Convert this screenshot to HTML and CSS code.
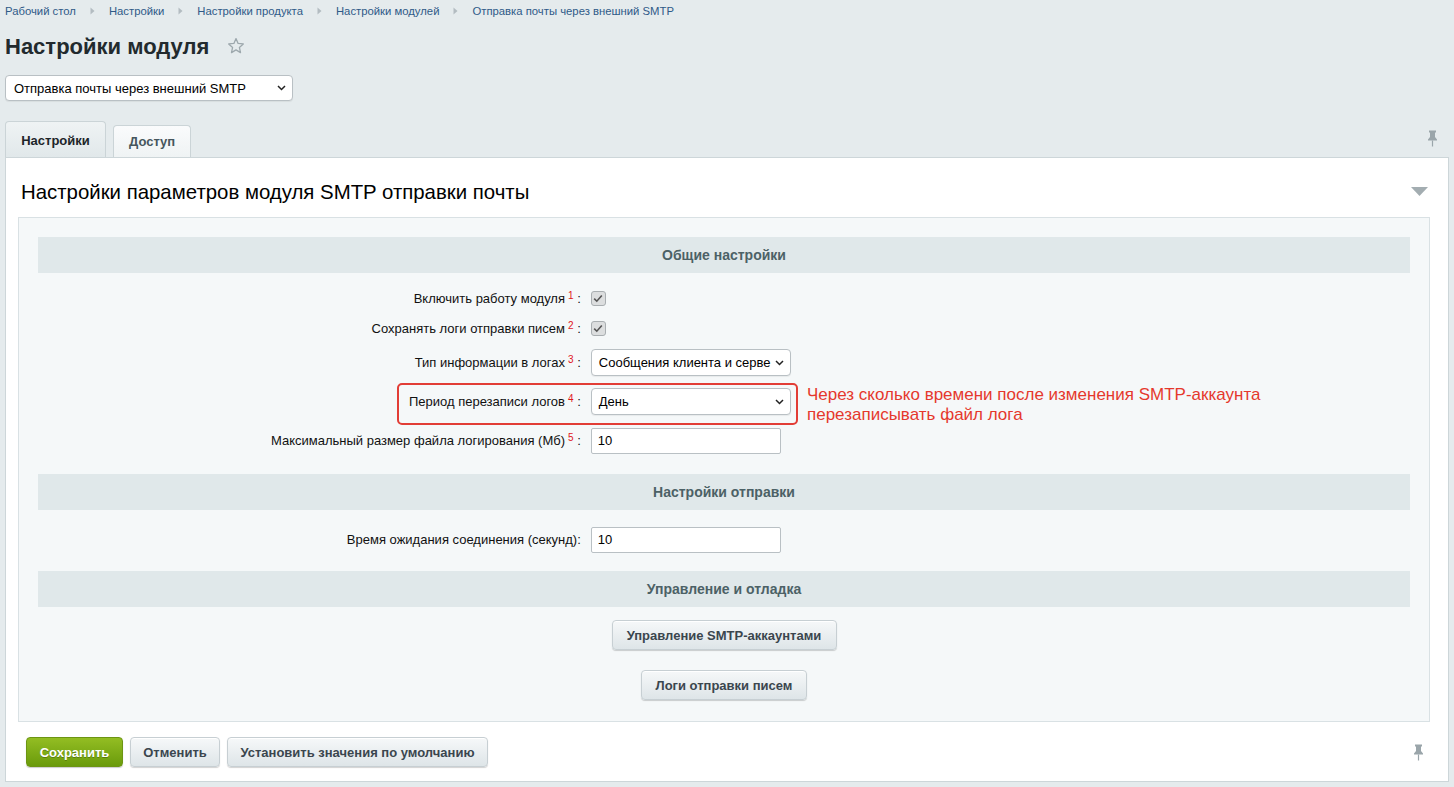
FILE: index.html
```html
<!DOCTYPE html>
<html lang="ru">
<head>
<meta charset="utf-8">
<title>Настройки модуля</title>
<link rel="stylesheet" href="styles.css">
</head>
<body>
<div class="page">
  <nav class="crumbs">
    <a class="crumb">Рабочий стол</a>
    <svg class="sep" width="5" height="8" viewBox="0 0 5 8"><path d="M0.5 0.5 L4.5 4 L0.5 7.5 Z" fill="#b3bcc1"/></svg>
    <a class="crumb">Настройки</a>
    <svg class="sep" width="5" height="8" viewBox="0 0 5 8"><path d="M0.5 0.5 L4.5 4 L0.5 7.5 Z" fill="#b3bcc1"/></svg>
    <a class="crumb">Настройки продукта</a>
    <svg class="sep" width="5" height="8" viewBox="0 0 5 8"><path d="M0.5 0.5 L4.5 4 L0.5 7.5 Z" fill="#b3bcc1"/></svg>
    <a class="crumb">Настройки модулей</a>
    <svg class="sep" width="5" height="8" viewBox="0 0 5 8"><path d="M0.5 0.5 L4.5 4 L0.5 7.5 Z" fill="#b3bcc1"/></svg>
    <a class="crumb">Отправка почты через внешний SMTP</a>
  </nav>

  <div class="title-row">
    <h1 class="title">Настройки модуля</h1>
    <svg class="star" width="18" height="18" viewBox="0 0 18 18"><path d="M9 1.6 L11.1 6.4 L16.3 6.9 L12.4 10.4 L13.5 15.6 L9 12.9 L4.5 15.6 L5.6 10.4 L1.7 6.9 L6.9 6.4 Z" fill="none" stroke="#9da8ad" stroke-width="1.3" stroke-linejoin="round"/></svg>
  </div>

  <div class="select module-select">
    <span class="select-text">Отправка почты через внешний SMTP</span>
    <svg class="chev" width="9" height="6" viewBox="0 0 9 6"><path d="M1 1 L4.5 4.5 L8 1" fill="none" stroke="#222" stroke-width="1.5"/></svg>
  </div>

  <div class="tabs">
    <div class="tab tab-active">Настройки</div>
    <div class="tab">Доступ</div>
    <div class="tabs-spacer"></div>
    <svg class="pin pin-top" width="11" height="17" viewBox="0 0 11 17"><path d="M2 0.5 H9 V2.5 H8 V7 L10 9.5 V10.5 H1 V9.5 L3 7 V2.5 H2 Z" fill="#9aa5aa"/><path d="M5.5 10.5 V16.5" stroke="#9aa5aa" stroke-width="1.2"/></svg>
  </div>

  <div class="panel">
    <div class="panel-head">
      <h2 class="panel-title">Настройки параметров модуля SMTP отправки почты</h2>
      <svg class="collapse" width="17" height="9" viewBox="0 0 17 9"><path d="M0 0 H17 L8.5 9 Z" fill="#a3adb1"/></svg>
    </div>

    <div class="inner">
      <section class="section sec-1">
        <div class="section-head">Общие настройки</div>
        <div class="row row-s">
          <div class="label">Включить работу модуля<sup class="num">1</sup> :</div>
          <div class="field"><span class="check"><svg width="10" height="9" viewBox="0 0 10 9"><path d="M1.2 4.6 L3.8 7.2 L8.8 1.4" fill="none" stroke="#555" stroke-width="1.6"/></svg></span></div>
        </div>
        <div class="row row-s">
          <div class="label">Сохранять логи отправки писем<sup class="num">2</sup> :</div>
          <div class="field"><span class="check"><svg width="10" height="9" viewBox="0 0 10 9"><path d="M1.2 4.6 L3.8 7.2 L8.8 1.4" fill="none" stroke="#555" stroke-width="1.6"/></svg></span></div>
        </div>
        <div class="row">
          <div class="label">Тип информации в логах<sup class="num">3</sup> :</div>
          <div class="field">
            <div class="select field-select">
              <span class="select-text">Сообщения клиента и серве</span>
              <svg class="chev" width="9" height="6" viewBox="0 0 9 6"><path d="M1 1 L4.5 4.5 L8 1" fill="none" stroke="#222" stroke-width="1.5"/></svg>
            </div>
          </div>
        </div>
        <div class="row row-mark">
          <div class="label">Период перезаписи логов<sup class="num">4</sup> :</div>
          <div class="field">
            <div class="select field-select">
              <span class="select-text">День</span>
              <svg class="chev" width="9" height="6" viewBox="0 0 9 6"><path d="M1 1 L4.5 4.5 L8 1" fill="none" stroke="#222" stroke-width="1.5"/></svg>
            </div>
          </div>
          <div class="mark-box"></div>
          <div class="mark-note">Через сколько времени после изменения SMTP-аккаунта<br>перезаписывать файл лога</div>
        </div>
        <div class="row">
          <div class="label">Максимальный размер файла логирования (Мб)<sup class="num">5</sup> :</div>
          <div class="field"><input class="text-input" type="text" value="10"></div>
        </div>
      </section>

      <section class="section sec-2">
        <div class="section-head">Настройки отправки</div>
        <div class="row">
          <div class="label">Время ожидания соединения (секунд):</div>
          <div class="field"><input class="text-input" type="text" value="10"></div>
        </div>
      </section>

      <section class="section sec-3">
        <div class="section-head">Управление и отладка</div>
        <div class="actions">
          <button class="btn btn-wide">Управление SMTP-аккаунтами</button>
          <button class="btn btn-mid">Логи отправки писем</button>
        </div>
      </section>
    </div>

    <div class="footer">
      <button class="btn btn-save">Сохранить</button>
      <button class="btn btn-cancel">Отменить</button>
      <button class="btn btn-default">Установить значения по умолчанию</button>
      <div class="tabs-spacer"></div>
      <svg class="pin pin-bottom" width="11" height="17" viewBox="0 0 11 17"><path d="M2 0.5 H9 V2.5 H8 V7 L10 9.5 V10.5 H1 V9.5 L3 7 V2.5 H2 Z" fill="#9aa5aa"/><path d="M5.5 10.5 V16.5" stroke="#9aa5aa" stroke-width="1.2"/></svg>
    </div>
  </div>
</div>
</body>
</html>
```

FILE: styles.css
```css
* { box-sizing: border-box; }

html, body {
  margin: 0;
  padding: 0;
}

body {
  background: #e5ebed;
  font-family: "Liberation Sans", Arial, Helvetica, sans-serif;
  font-size: 13px;
  color: #000;
}

.page {
  padding: 0 5px;
}

/* breadcrumbs */
.crumbs {
  height: 22px;
  display: flex;
  align-items: center;
  font-size: 11.3px;
}

.crumb {
  color: #2f5a88;
  text-decoration: none;
  white-space: nowrap;
}

.sep {
  margin: 0 14px;
}

/* title */
.title-row {
  margin-top: 11px;
  height: 28px;
  display: flex;
  align-items: center;
}

.title {
  margin: 0;
  font-size: 22px;
  font-weight: bold;
  color: #222a2e;
  line-height: 28px;
}

.star {
  margin-left: 18px;
  margin-top: -2px;
}

/* selects */
.select {
  position: relative;
  display: flex;
  align-items: center;
  background: #fff;
  border: 1px solid #b9c0c4;
  border-radius: 4px;
  box-shadow: 0 1px 1px rgba(0,0,0,0.06);
  white-space: nowrap;
  color: #000;
}

.select-text {
  white-space: nowrap;
}

.chev {
  position: absolute;
  top: 50%;
  margin-top: -3px;
}

.module-select {
  margin-top: 14px;
  width: 288px;
  height: 26px;
  padding-left: 8px;
}

.module-select .chev {
  right: 6px;
}

.field-select {
  width: 200px;
  height: 27px;
  padding-left: 7px;
  padding-right: 20px;
}

.field-select .chev {
  right: 6px;
}

/* tabs */
.tabs {
  margin-top: 20px;
  height: 36px;
  display: flex;
  align-items: flex-end;
}

.tab {
  height: 32px;
  padding: 0 15px;
  margin-right: 7px;
  display: flex;
  align-items: center;
  justify-content: center;
  font-weight: bold;
  font-size: 13px;
  color: #46565d;
  border: 1px solid #cbd4d7;
  border-bottom: none;
  border-radius: 4px 4px 0 0;
  background: linear-gradient(#fafbfc, #eff3f4);
  min-width: 78px;
}

.tab-active {
  height: 36px;
  width: 101px;
  color: #1d2529;
  background: linear-gradient(#eff3f4, #e1e8ea);
  padding-top: 2px;
}

.tabs-spacer {
  flex: 1;
}

.pin-top {
  margin-right: 11px;
  margin-bottom: 10px;
}

/* panel */
.panel {
  background: #fff;
  border: 1px solid #cdd6d9;
}

.panel-head {
  height: 59px;
  padding: 9px 20px 0 15px;
  display: flex;
  align-items: center;
  justify-content: space-between;
}

.panel-title {
  margin: 0;
  font-size: 20.4px;
  font-weight: normal;
  color: #000;
}

.collapse {
  margin-top: -1px;
}

.inner {
  margin: 0 18px 0 12px;
  background: #f5f8f9;
  border: 1px solid #d9e1e4;
  padding: 19px 19px 21px 19px;
}

.section-head {
  height: 36px;
  line-height: 36px;
  background: #e0e8ea;
  text-align: center;
  font-weight: bold;
  font-size: 14px;
  color: #4c6166;
  margin-bottom: 10px;
}

.sec-1 { padding-bottom: 14px; }
.sec-2 { padding-bottom: 12px; }

.row {
  position: relative;
  display: grid;
  grid-template-columns: 40% 60%;
  align-items: center;
  height: 39px;
}

.row-s {
  height: 30px;
}

.label {
  text-align: right;
  padding-right: 6px;
  white-space: nowrap;
  color: #111;
}

.num {
  color: #e0161c;
  font-size: 10px;
  margin-left: 3px;
  vertical-align: 4px;
  line-height: 0;
}

.field {
  padding-left: 4px;
  display: flex;
  align-items: center;
}

.check {
  width: 15px;
  height: 15px;
  border: 1px solid #a9aeb1;
  border-radius: 3px;
  background: #dcdedf;
  display: flex;
  align-items: center;
  justify-content: center;
}

.text-input {
  width: 190px;
  height: 26px;
  border: 1px solid #b9c0c4;
  border-radius: 2px;
  background: #fff;
  font-family: inherit;
  font-size: 13px;
  padding: 0 6px;
  color: #000;
  outline: none;
}

.mark-box {
  position: absolute;
  left: 359px;
  top: 1px;
  width: 401px;
  height: 42px;
  border: 2px solid #e23d36;
  border-radius: 5px;
  pointer-events: none;
}

.mark-note {
  position: absolute;
  left: 769px;
  top: 3px;
  font-size: 17px;
  line-height: 20px;
  color: #e5382d;
  white-space: nowrap;
}

.actions {
  margin-top: 13px;
  display: flex;
  flex-direction: column;
  align-items: center;
  gap: 20px;
}

/* buttons */
.btn {
  height: 30px;
  padding: 0 6px;
  border: 1px solid #c7cfd3;
  border-radius: 4px;
  background: linear-gradient(#f6f8f9, #dee5e8);
  box-shadow: 0 1px 1px rgba(0,0,0,0.18), inset 0 1px 0 #fff;
  font-family: inherit;
  font-weight: bold;
  font-size: 13px;
  color: #3b464e;
  white-space: nowrap;
  cursor: pointer;
}

.btn-wide { width: 225px; }
.btn-mid { width: 166px; }

.footer {
  padding: 15px 24px 14px 20px;
  display: flex;
  align-items: center;
  gap: 7px;
}

.btn-cancel { width: 90px; }
.btn-default { width: 261px; }

.btn-save {
  width: 97px;
  color: #fff;
  border: 1px solid #6c9513;
  background: linear-gradient(#93bd23, #6a9b0b);
  text-shadow: 0 1px 0 rgba(0,0,0,0.25);
  box-shadow: 0 1px 1px rgba(0,0,0,0.2);
}
```
